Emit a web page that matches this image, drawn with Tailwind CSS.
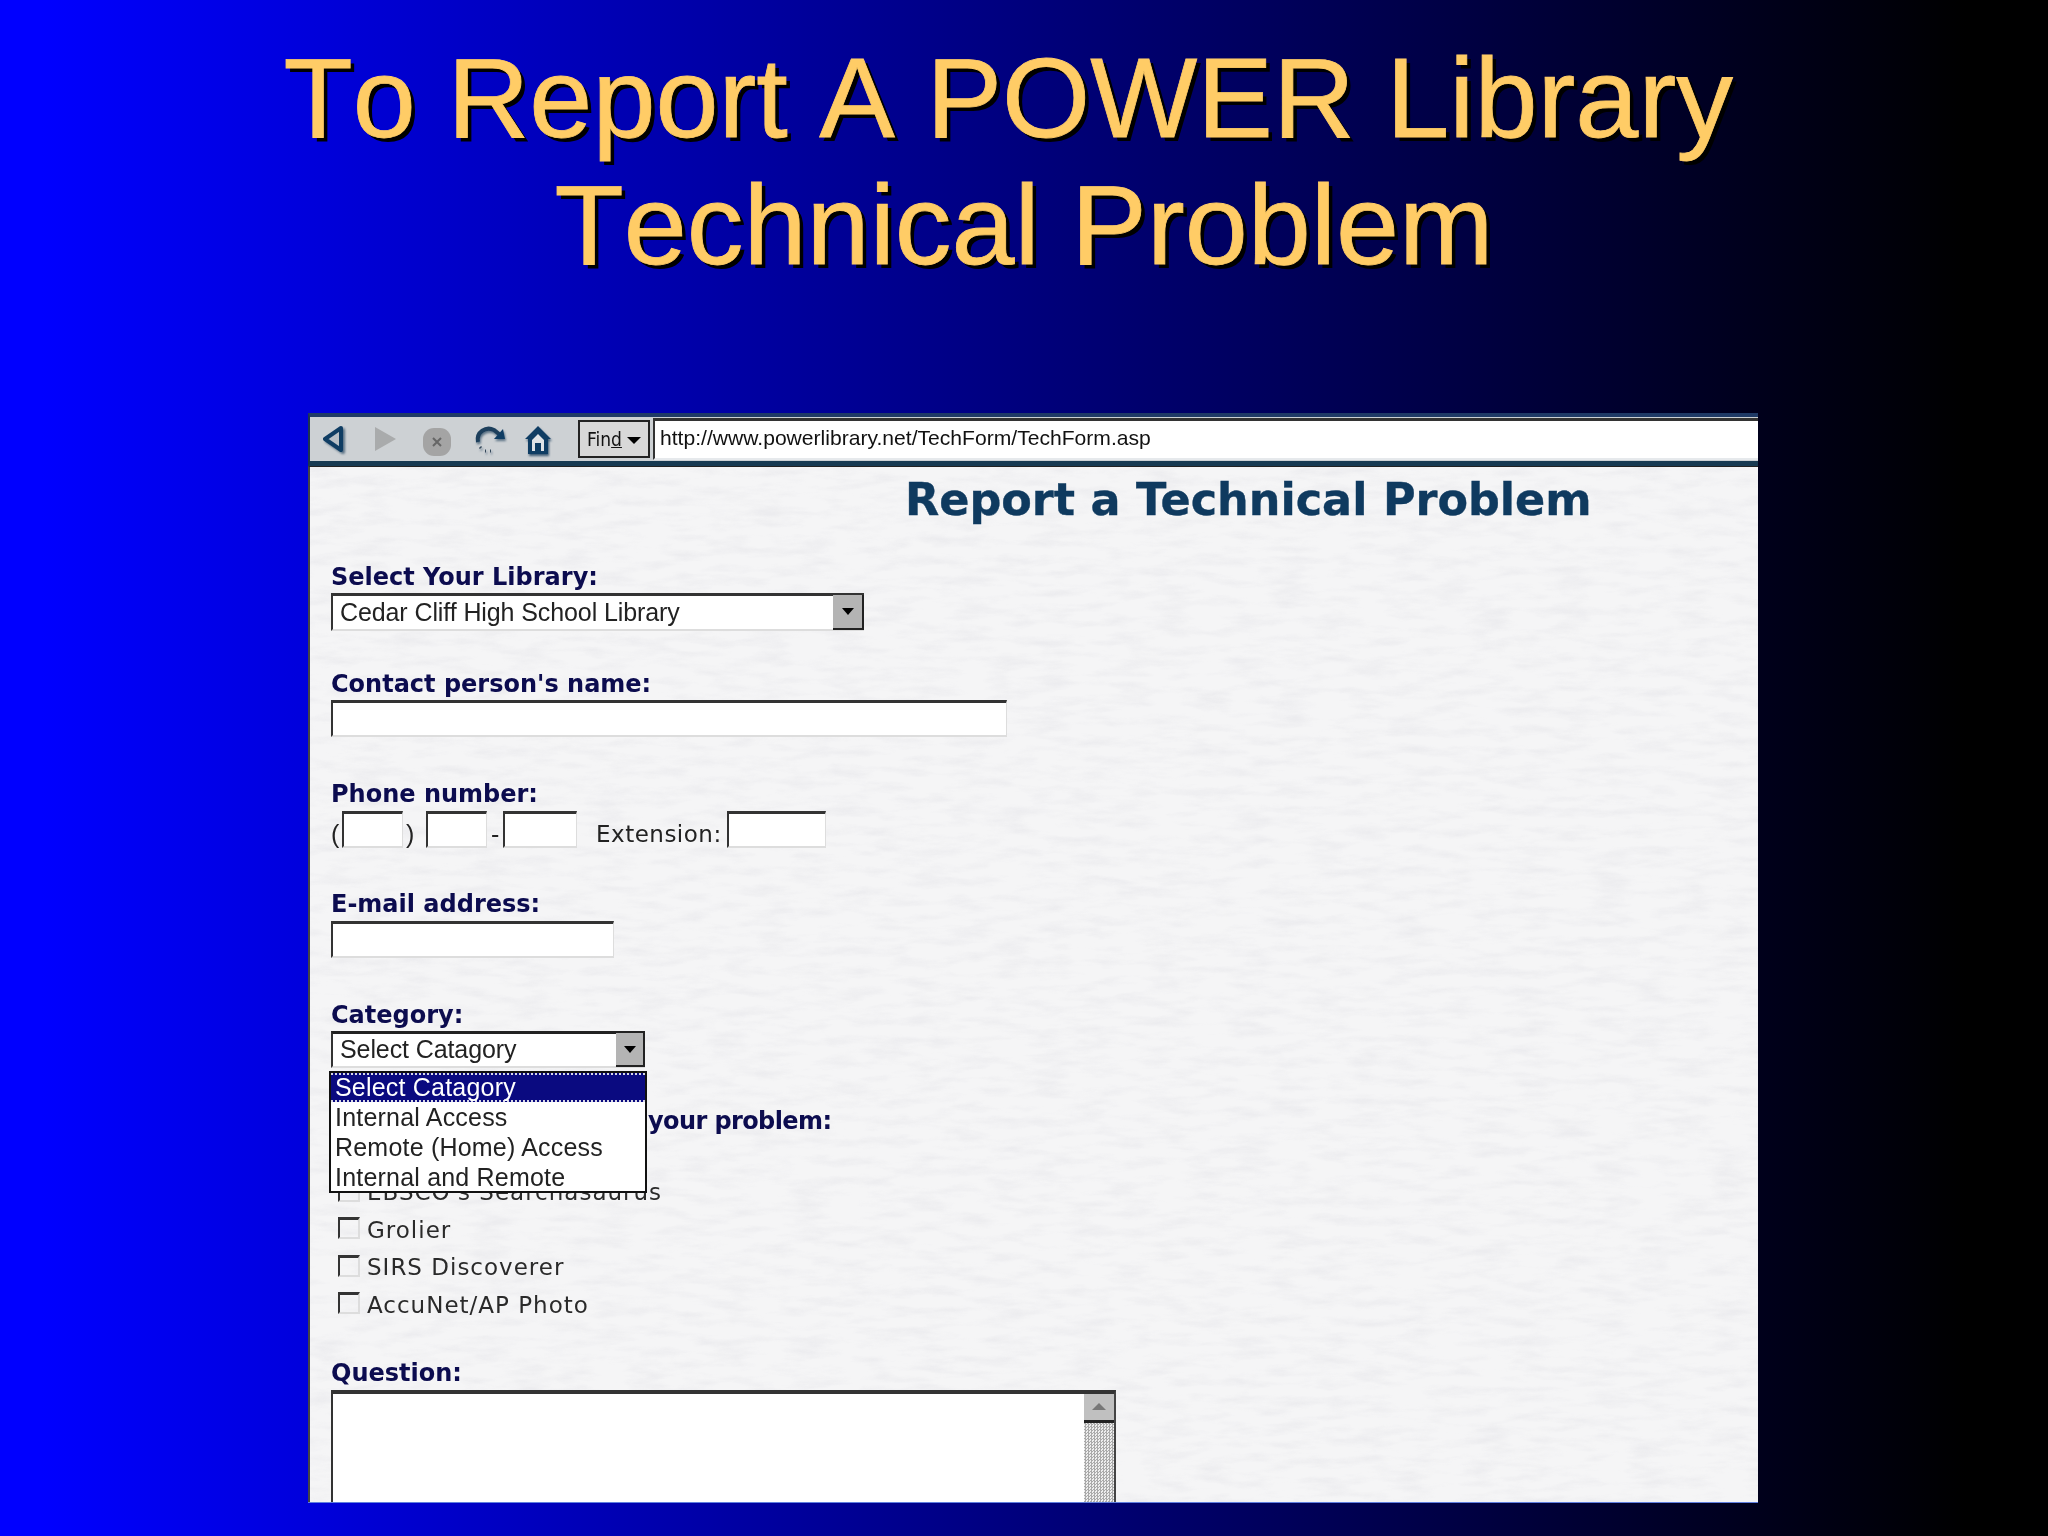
<!DOCTYPE html>
<html lang="en">

<head>
    <meta charset="UTF-8">
    <title>To Report A POWER Library Technical Problem</title>
    <script src="https://cdn.jsdelivr.net/npm/@tailwindcss/browser@4"></script>
</head>

<body class="w-[2048px] h-[1536px] overflow-hidden bg-[linear-gradient(90deg,#0000ff_2%,#000000_96%)] font-['Liberation_Sans',Arial,sans-serif]">
    <h1 class="pt-[34px] h-[413px] text-center text-[113.4px] leading-[127px] text-[#ffcc66] [font-kerning:none] [-webkit-text-stroke:0.8px_#ffcc66] [text-shadow:4px_4px_0.5px_#000]">
        To Report A POWER Library&nbsp;<br>Technical Problem
    </h1>

    <!-- browser screenshot -->
    <div class="ml-[308px] w-[1450px] h-[1090px] flex flex-col overflow-hidden blur-[0.4px] border-b border-b-[#5f7fe0]">
        <!-- toolbar -->
        <div class="h-[53px] shrink-0 flex items-center bg-[#cdd1d4] border-t-4 border-t-[#1f3a66] border-b-[5px] border-b-[#173a52] border-l-2 border-l-[#1c3350]">
            <div class="flex items-center pl-[11px] w-[268px] shrink-0">
                <svg width="24" height="28" viewBox="0 0 24 28" class="mr-[28px] drop-shadow-[2px_2px_1px_#5a7184]">
                    <path d="M20 3 L4 14 L20 25 Z" fill="#b9c0c6" stroke="#0f3d63" stroke-width="4" stroke-linejoin="round" />
                </svg>
                <svg width="24" height="28" viewBox="0 0 24 28" class="mr-[25px]">
                    <path d="M2 2 L23 14 L2 26 Z" fill="#a9abac" />
                </svg>
                <svg width="30" height="30" viewBox="0 0 30 30" class="mt-[6px] mr-[20px]">
                    <rect x="1" y="1" width="28" height="28" rx="11" fill="#a4a4a4" />
                    <path d="M11 11 L19 19 M19 11 L11 19" stroke="#666" stroke-width="2" />
                </svg>
                <svg width="34" height="30" viewBox="0 0 34 30" class="mr-[17px] drop-shadow-[1px_2px_1px_#5a7184]">
                    <path d="M6 18 C4 8 14 2 22 6 L27 10" fill="none" stroke="#1d3f5c" stroke-width="4" />
                    <path d="M22 15 L33 15 L31 5 Z" fill="#0f3d63" />
                    <path d="M8 23 L9 24 M13 27 L14 27 M18 27 L19 27" stroke="#33475a" stroke-width="3" />
                </svg>
                <svg width="30" height="33" viewBox="0 0 30 33" class="mt-[2px] drop-shadow-[1px_2px_1px_#3d5a73]">
                    <path d="M15 2 L28 15 L25 15 L25 30 L5 30 L5 15 L2 15 Z" fill="#0f3d63" />
                    <path d="M9 16 L15 10 L21 16 L21 27 L18 27 L18 19 L12 19 L12 27 L9 27 Z" fill="#dfe3e6" />
                </svg>
            </div>
            <button class="w-[72px] h-[38px] flex items-center justify-center gap-[5px] bg-[#d8d8d8] border-2 border-[#222] text-[19px] text-[#111] font-['DejaVu_Sans',sans-serif] font-stretch-condensed">
                <span>Fin<u>d</u></span>
                <span class="w-0 h-0 border-x-[7px] border-x-transparent border-t-[7px] border-t-black mt-[2px]"></span>
            </button>
            <div class="ml-[3px] flex-1 h-[42px] flex items-center pl-[5px] pb-[4px] bg-white border-t-[3px] border-t-[#333] border-l-2 border-l-[#333] border-b-2 border-b-[#e6e9ec] text-[21.1px] text-[#111]">
                http://www.powerlibrary.net/TechForm/TechForm.asp
            </div>
        </div>

        <!-- page body -->
        <div class="relative flex-1 pl-[21px] bg-[#f5f5f6] border-l-2 border-l-[#444] border-t border-t-[#222] text-[#0c0c4f] font-['DejaVu_Sans',sans-serif]">
            <!-- paper texture -->
            <svg class="absolute inset-0 w-full h-full" aria-hidden="true">
                <filter id="paper" x="0" y="0" width="100%" height="100%">
                    <feTurbulence type="fractalNoise" baseFrequency="0.025 0.1" numOctaves="5" seed="11" />
                    <feColorMatrix type="matrix" values="0 0 0 0 0.74  0 0 0 0 0.74  0 0 0 0 0.78  2.2 0 0 0 -0.95" />
                </filter>
                <rect width="100%" height="100%" filter="url(#paper)" opacity="0.4" />
            </svg>

            <div class="relative flex flex-col">
                <h2 class="pt-[8px] pl-[574px] h-[65px] text-[44.5px] leading-[50px] font-bold text-[#0f3a5f] [-webkit-text-stroke:0.4px_#0f3a5f] whitespace-nowrap">Report a Technical Problem</h2>

                <label class="mt-[33px] h-[24px] text-[24px] leading-[24px] font-bold">Select Your Library:</label>
                <div class="mt-[4px] w-[533px] h-[38px] flex items-center justify-between pl-[7px] bg-white border-t-[3px] border-t-[#333] border-l-2 border-l-[#333] border-b-2 border-b-[#ddd] font-['Liberation_Sans',sans-serif] text-[25px] tracking-[-0.1px] text-[#222]">
                    Cedar Cliff High School Library
                    <span class="w-[31px] h-[35px] flex items-center justify-center bg-[#b4b4b4] border-b-2 border-b-[#222] border-r-2 border-r-[#222]"><span class="w-0 h-0 border-x-[6px] border-x-transparent border-t-[7px] border-t-black"></span></span>
                </div>

                <label class="mt-[41px] h-[24px] text-[24px] leading-[24px] font-bold">Contact person's name:</label>
                <div class="mt-[4px] w-[676px] h-[37px] bg-white border-t-[3px] border-t-[#333] border-l-2 border-l-[#333] border-b-2 border-b-[#ddd] border-r border-r-[#ddd]"></div>

                <label class="mt-[45px] h-[24px] text-[24px] leading-[24px] font-bold">Phone number:</label>
                <div class="mt-[5px] h-[37px] flex font-['Liberation_Sans',sans-serif] text-[25px] text-[#222]">
                    <span class="w-[11px] leading-[46px]">(</span>
                    <div class="w-[61px] bg-white border-t-[3px] border-t-[#333] border-l-2 border-l-[#333] border-b-2 border-b-[#ddd] border-r border-r-[#ddd]"></div>
                    <span class="w-[23px] pl-[3px] leading-[46px]">)</span>
                    <div class="w-[61px] bg-white border-t-[3px] border-t-[#333] border-l-2 border-l-[#333] border-b-2 border-b-[#ddd] border-r border-r-[#ddd]"></div>
                    <span class="w-[16px] pl-[4px] leading-[46px]">-</span>
                    <div class="w-[74px] bg-white border-t-[3px] border-t-[#333] border-l-2 border-l-[#333] border-b-2 border-b-[#ddd] border-r border-r-[#ddd]"></div>
                    <span class="w-[150px] pl-[19px] leading-[46px] font-['DejaVu_Sans',sans-serif] text-[23px] tracking-[0.5px] whitespace-nowrap">Extension:</span>
                    <div class="w-[99px] bg-white border-t-[3px] border-t-[#333] border-l-2 border-l-[#333] border-b-2 border-b-[#ddd] border-r border-r-[#ddd]"></div>
                </div>

                <label class="mt-[44px] h-[24px] text-[24px] leading-[24px] font-bold">E-mail address:</label>
                <div class="mt-[5px] w-[283px] h-[37px] bg-white border-t-[3px] border-t-[#333] border-l-2 border-l-[#333] border-b-2 border-b-[#ddd] border-r border-r-[#ddd]"></div>

                <label class="mt-[45px] h-[24px] text-[24px] leading-[24px] font-bold">Category:</label>
                <div class="mt-[4px] w-[314px] h-[37px] flex items-center justify-between pl-[7px] bg-white border-t-[3px] border-t-[#222] border-l-2 border-l-[#333] border-b-2 border-b-[#ddd] font-['Liberation_Sans',sans-serif] text-[25px] tracking-[-0.1px] text-[#222]">
                    Select Catagory
                    <span class="w-[29px] h-[34px] flex items-center justify-center bg-[#b4b4b4] border-b-2 border-b-[#222] border-r-2 border-r-[#222]"><span class="w-0 h-0 border-x-[6px] border-x-transparent border-t-[7px] border-t-black"></span></span>
                </div>

                <label class="mt-[41px] h-[24px] pl-[317px] text-[24px] leading-[24px] font-bold tracking-[-0.6px]">your problem:</label>

                <div class="mt-[44px] flex flex-col gap-[7.5px] pl-[7px] text-[23px] tracking-[1px] leading-[30px] text-[#2a2a2a]">
                    <div class="flex items-center gap-[7px] h-[30px]"><span class="w-[22px] h-[22px] mb-[3px] border-t-[3px] border-t-[#333] border-l-2 border-l-[#333] border-b-2 border-b-[#ddd] border-r-2 border-r-[#ddd]"></span>EBSCO's Searchasaurus</div>
                    <div class="flex items-center gap-[7px] h-[30px]"><span class="w-[22px] h-[22px] mb-[3px] border-t-[3px] border-t-[#333] border-l-2 border-l-[#333] border-b-2 border-b-[#ddd] border-r-2 border-r-[#ddd]"></span>Grolier</div>
                    <div class="flex items-center gap-[7px] h-[30px]"><span class="w-[22px] h-[22px] mb-[3px] border-t-[3px] border-t-[#333] border-l-2 border-l-[#333] border-b-2 border-b-[#ddd] border-r-2 border-r-[#ddd]"></span>SIRS Discoverer</div>
                    <div class="flex items-center gap-[7px] h-[30px]"><span class="w-[22px] h-[22px] mb-[3px] border-t-[3px] border-t-[#333] border-l-2 border-l-[#333] border-b-2 border-b-[#ddd] border-r-2 border-r-[#ddd]"></span>AccuNet/AP Photo</div>
                </div>

                <label class="mt-[41px] h-[24px] text-[24px] leading-[24px] font-bold">Question:</label>
                <div class="mt-[5px] w-[785px] h-[200px] flex justify-end bg-white border-t-[4px] border-t-[#333] border-l-2 border-l-[#333] border-r-2 border-r-[#444]">
                    <div class="w-[30px] flex flex-col bg-[repeating-conic-gradient(#aaa_0_25%,#eee_0_50%)] bg-[length:3px_3px]">
                        <span class="h-[29px] flex items-center justify-center bg-[#c0c0c0] border-b-[3px] border-b-[#222]"><span class="w-0 h-0 border-x-[7px] border-x-transparent border-b-[7px] border-b-[#777]"></span></span>
                    </div>
                </div>
            </div>

            <!-- open category menu -->
            <div class="absolute left-[19px] top-[604px] w-[318px] h-[122px] bg-white border-2 border-[#111] font-['Liberation_Sans',sans-serif] text-[25px] leading-[30px] tracking-[0.2px] text-[#222]">
                <div class="h-[29px] pl-[4px] leading-[25px] bg-[#0a0a80] text-white border-y-2 border-dotted border-y-[#d8d8e8]">Select Catagory</div>
                <div class="pl-[4px]">Internal Access</div>
                <div class="pl-[4px]">Remote (Home) Access</div>
                <div class="pl-[4px]">Internal and Remote</div>
            </div>
        </div>
    </div>
</body>

</html>
